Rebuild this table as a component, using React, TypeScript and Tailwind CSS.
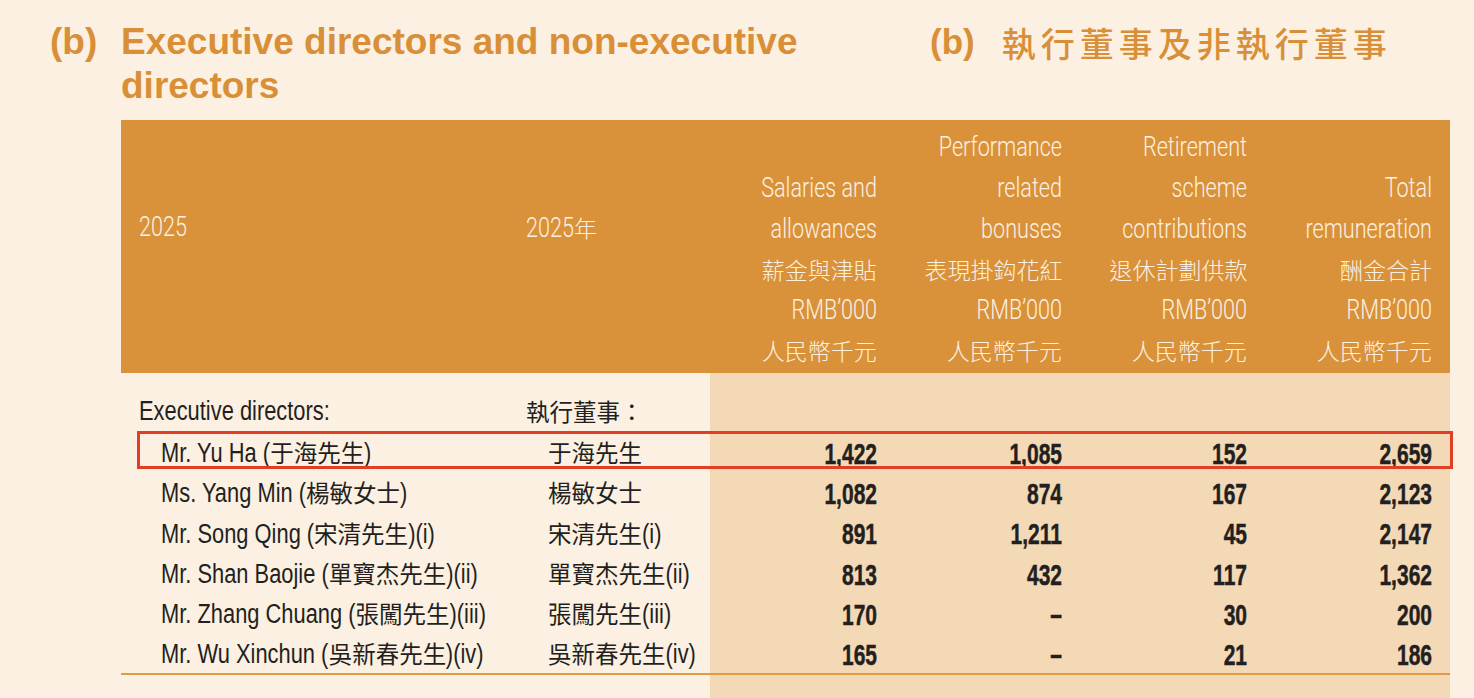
import React from 'react';

type Row = { en: string; zh: string; v: string[] };

const rows: Row[] = [
  { en: 'Mr. Yu Ha (于海先生)', zh: '于海先生', v: ['1,422', '1,085', '152', '2,659'] },
  { en: 'Ms. Yang Min (楊敏女士)', zh: '楊敏女士', v: ['1,082', '874', '167', '2,123'] },
  { en: 'Mr. Song Qing (宋清先生)(i)', zh: '宋清先生(i)', v: ['891', '1,211', '45', '2,147'] },
  { en: 'Mr. Shan Baojie (單寶杰先生)(ii)', zh: '單寶杰先生(ii)', v: ['813', '432', '117', '1,362'] },
  { en: 'Mr. Zhang Chuang (張闖先生)(iii)', zh: '張闖先生(iii)', v: ['170', '–', '30', '200'] },
  { en: 'Mr. Wu Xinchun (吳新春先生)(iv)', zh: '吳新春先生(iv)', v: ['165', '–', '21', '186'] },
];

const headCols: string[][] = [
  ['Salaries and', 'allowances', '薪金與津貼'],
  ['Performance', 'related', 'bonuses', '表現掛鈎花紅'],
  ['Retirement', 'scheme', 'contributions', '退休計劃供款'],
  ['Total', 'remuneration', '酬金合計'],
];

const COLS = 'grid grid-cols-[405px_184px_185px_185px_185px_185px]';
const CJK_RE = /([\u3000-\u9fff\uff00-\uffef]+)/;

// The print uses a condensed face, so lines are squeezed with scale-x.
// Chinese runs get the opposite scale (and the room it needs) so they keep square glyphs.
function Mixed({ text, cjk, grow }: { text: string; cjk: string; grow: number }) {
  const parts = text.split(CJK_RE).filter(Boolean);
  return (
    <span className="whitespace-nowrap">
      {parts.map((p, i) =>
        CJK_RE.test(p) ? (
          <span key={i} className={cjk} style={{ marginRight: `${p.length * grow}em` }}>
            {p}
          </span>
        ) : (
          <span key={i}>{p}</span>
        )
      )}
    </span>
  );
}

function HeadLine({ text, right }: { text: string; right?: boolean }) {
  return (
    <div
      className={`flex h-[40.6px] leading-[40.6px] scale-x-[0.8] ${
        right ? 'justify-end origin-right' : 'origin-left'
      }`}
    >
      <Mixed
        text={text}
        cjk="inline-block origin-left scale-x-[1.25] text-[23px] font-light font-['Noto_Sans_CJK_TC',sans-serif]"
        grow={0.25}
      />
    </div>
  );
}

const BODY_CJK = "inline-block origin-left scale-x-[1.235] text-[23.5px] font-['Noto_Sans_CJK_TC',sans-serif]";

export default function App() {
  return (
    <div className="w-[1474px] h-[698px] overflow-hidden bg-[#FBF0E1] font-['Liberation_Sans','Noto_Sans_CJK_TC',sans-serif]">
      {/* headings */}
      <div className="flex pt-[20px] h-[120px] text-[#D98F37]">
        <div className="flex w-[880px] font-bold text-[37px] leading-[44px]">
          <span className="w-[71px] pl-[50px] box-content shrink-0">(b)</span>
          <span>
            Executive directors and non-executive
            <br />
            directors
          </span>
        </div>
        <div className="flex items-center h-[44px] ml-[50px]">
          <span className="font-bold text-[35px]">(b)</span>
          <span className="ml-[27px] font-['Noto_Sans_CJK_TC',sans-serif] font-medium text-[34px] tracking-[5px]">
            執行董事及非執行董事
          </span>
        </div>
      </div>

      {/* table */}
      <div className="ml-[121px] w-[1329px]">
        <div className={`${COLS} bg-[#D9923A] text-[#FBF0E1] h-[253px] pt-[6px] text-[27px] font-light font-['Roboto','Liberation_Sans',sans-serif]`}>
          <div className="pl-[18px] pt-[81.2px]">
            <HeadLine text="2025" />
          </div>
          <div className="pt-[81.2px]">
            <HeadLine text="2025年" />
          </div>
          {headCols.map((c, i) => (
            <div key={i} className="flex flex-col justify-end pr-[18px] pb-[2px]">
              {c.map((t) => (
                <HeadLine key={t} text={t} right />
              ))}
              <HeadLine text="RMB’000" right />
              <HeadLine text="人民幣千元" right />
            </div>
          ))}
        </div>

        <div className="relative h-[325px] bg-[linear-gradient(to_right,#FBF0E1_589px,#F3D9B6_589px)] pt-[18px] text-[#231F20] text-[27px]">
          <div className={`${COLS} h-[40px] items-center`}>
            <div className="pl-[18px]">
              <div className="whitespace-nowrap scale-x-[0.81] origin-left">Executive directors:</div>
            </div>
            <div className="text-[23.5px] font-['Noto_Sans_CJK_TC',sans-serif]">執行董事：</div>
          </div>
          {rows.map((r, i) => (
            <div key={i} className={`${COLS} relative h-[40.2px] pb-[4px] items-center`}>
              <div className="pl-[40px]">
                <div className="scale-x-[0.81] origin-left">
                  <Mixed text={r.en} cjk={BODY_CJK} grow={0.235} />
                </div>
              </div>
              <div className="pl-[22px]">
                <div className="scale-x-[0.81] origin-left">
                  <Mixed text={r.zh} cjk={BODY_CJK} grow={0.235} />
                </div>
              </div>
              {r.v.map((n, j) => (
                <div key={j} className="pr-[18px]">
                  <div className="text-right font-bold text-[30px] scale-x-[0.7] origin-right [-webkit-text-stroke:0.5px_#231F20]">
                    {n}
                  </div>
                </div>
              ))}
              {i === 0 && (
                <div className="absolute left-[16px] -right-[3px] top-0 h-[38px] border-[3px] border-[#E23D25]" />
              )}
            </div>
          ))}
          <div className="h-[2px] bg-[#E39A42] mt-[1px]" />
        </div>
      </div>
    </div>
  );
}
